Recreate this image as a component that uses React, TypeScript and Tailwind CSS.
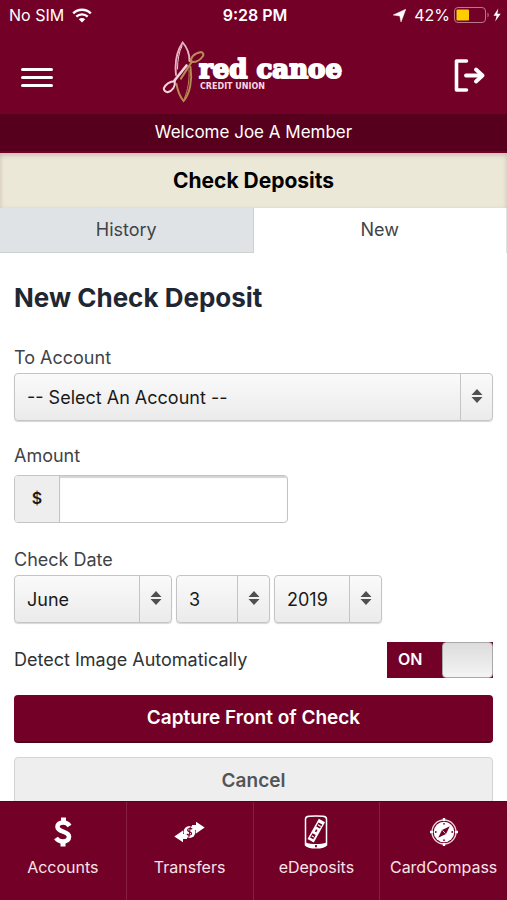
import React, { useState } from "react"

import clsx from "clsx"

type IconProps = { className?: string }

const WifiIcon = ({ className }: IconProps) => (
  <svg viewBox="0 0 20 15" className={className} fill="none" aria-hidden="true">
    <path d="M1.2 5.3a12.6 12.6 0 0 1 17.6 0" stroke="#fff" strokeWidth="2.4" />
    <path d="M4.3 8.6a8.2 8.2 0 0 1 11.4 0" stroke="#fff" strokeWidth="2.3" />
    <path d="M10 14.4 6.8 11.2a4.6 4.6 0 0 1 6.4 0z" fill="#fff" />
  </svg>
)

const LocationIcon = ({ className }: IconProps) => (
  <svg viewBox="0 0 13 13" className={className} aria-hidden="true">
    <path d="M12.8.2 8 13 6.8 7 .2 6z" fill="#fff" stroke="#fff" strokeWidth=".5" />
  </svg>
)

const BatteryIcon = ({ className }: IconProps) => (
  <svg viewBox="0 0 47 16" className={className} aria-hidden="true">
    <rect x=".5" y=".5" width="31" height="15" rx="3.5" fill="none" stroke="#b87a8b" />
    <path d="M33.5 5.5c1.6.6 1.6 4.4 0 5z" fill="#b87a8b" />
    <rect x="2.5" y="2.5" width="12.5" height="11" rx="1" fill="#ffcc00" />
    <path d="M44.3 1.5 39.5 8.8h3.1L41.2 14.5l5.5-7.7h-3.3z" fill="#fff" />
  </svg>
)

const Logo = () => (
  <svg
    viewBox="0 0 184 62"
    className="h-[62px] w-[184px]"
    role="img"
    aria-label="red canoe credit union"
  >
    <g fill="none" strokeLinecap="round">
      <path d="M14 34C12.500 20 15.500 9 20.700 1.500 25.500 7 27.500 14 27.500 20" stroke="#e6b3c1" strokeWidth="1.900" />
      <path d="M15.500 28c0-9 1.500-17 4.500-23" stroke="#f3d3dc" strokeWidth="1" />
      <path d="M14.500 43c1 6.500 3.500 12.500 7 17 6.500-7 9-21 7-34" stroke="#b98a58" strokeWidth="1.900" />
      <path d="M27 29c.5 10-1 20-4.500 28" stroke="#b98a58" strokeWidth="1" />
      <path d="M19 37.500 30 20.500" stroke="#b98a58" strokeWidth="2.200" />
      <path d="M29 21c-.8-4.500 3-9 10.500-10 2 1.200 2.200 2.500 1.500 4-2.800 4.300-7.500 6.500-12 6z" stroke="#b98a58" strokeWidth="2" />
      <path d="M12.500 39.500 24.500 24.500" stroke="#f3d3dc" strokeWidth="2.600" />
      <path d="M12.800 40.300C8.500 40.500 4 43 1.800 47.200c0 2 1.500 3.500 3.800 4C10.500 50 13.500 45.500 12.800 40.300z" stroke="#f3d3dc" strokeWidth="2" />
    </g>
    <text
      x="37"
      y="37"
      fill="#fff"
      stroke="#fff"
      strokeWidth="2"
      strokeLinejoin="round"
      className="font-['DejaVu_Serif',serif] text-[26px] font-bold"
    >
      red canoe
    </text>
    <text
      x="38"
      y="48"
      fill="#f3d9e0"
      className="font-['DejaVu_Sans',sans-serif] text-[8px] font-bold"
    >
      CREDIT UNION
    </text>
  </svg>
)

const LogoutIcon = ({ className }: IconProps) => (
  <svg viewBox="0 0 31 33" className={className} fill="none" stroke="#fff" aria-hidden="true">
    <path d="M12.5 2h-10v29h10" strokeWidth="3.6" strokeLinecap="round" strokeLinejoin="round" />
    <path d="M12 16.5h16" strokeWidth="3.8" strokeLinecap="round" />
    <path d="m22 10.5 6.5 6-6.5 6" strokeWidth="3.8" strokeLinecap="round" strokeLinejoin="round" />
  </svg>
)

const DollarIcon = () => (
  <svg viewBox="0 0 18 30" className="h-[30px] w-[18px]" fill="none" stroke="#fff" aria-hidden="true">
    <path d="M15.5 9C14 6.5 11.8 5.500 9.200 5.500c-3.400 0-5.700 1.700-5.700 4.300 0 6 11.500 3.600 11.500 10 0 2.900-2.400 4.700-6 4.700-3 0-5.400-1.200-7-3.500" strokeWidth="4.600" />
    <path d="M9.500.5V6M9 24v5.500" strokeWidth="5" />
  </svg>
)

const TransferIcon = () => (
  <svg viewBox="0 0 31 22" className="h-[22px] w-[31px]" aria-hidden="true">
    <path d="M22 .7 30.700 6.500 22 12.500V9h-4V4h4z" fill="#fff" />
    <path d="M9 9.500.3 15.500 9 21.300V18h4v-5H9z" fill="#fff" />
    <circle cx="15.500" cy="11" r="6" fill="#fff" />
    <path d="M18.300 8.200c-1.700-1.500-4.800-.8-4.700.9.100 1.900 4.200 1.500 4 3.600-.2 1.600-3.200 1.800-4.800.3M16.400 5.500l-1.600 11" fill="none" stroke="#730026" strokeWidth="1.100" />
  </svg>
)

const PhoneCheckIcon = () => (
  <svg viewBox="0 0 24 34" className="h-[34px] w-6" aria-hidden="true">
    <path d="M1.5 4C1.5 2.2 3 1.500 5 1.300c4.500-.5 9.500-.5 14 0 2 .2 3.500.9 3.500 2.700v26c-1.500 2-5.500 2.800-10.500 2.800S3 32 1.500 30z" fill="none" stroke="#fff" strokeWidth="1.500" />
    <path d="M1.500 27.500c6 2 15 2 21 0V30c-2 4-19 4-21 0z" fill="#fff" />
    <path d="M12 30v2.200" stroke="#730026" strokeWidth="1.800" />
    <path d="M14.800 3.800 21 7.300 9.800 27.500 3.500 24z" fill="#fff" />
    <g fill="#730026">
      <path d="m14.500 7.500 3.800 2-2.400 4-3.700-2z" />
      <path d="m12 14.200 1.500.8-1.200 2.200-1.500-.8z" />
      <path d="m8.500 18.200 3.300 1.800-2.500 4.300L6 22.500z" />
    </g>
    <path d="m14 9.800 2.800 1.600M7.800 20.700l2 1.400" stroke="#fff" strokeWidth="1.100" />
  </svg>
)

const CompassIcon = () => (
  <svg viewBox="0 0 28 28" className="size-7" aria-hidden="true">
    <circle cx="14" cy="14" r="12" fill="none" stroke="#f0d5dd" strokeWidth="1.300" />
    <circle cx="14" cy="14" r="10.300" fill="#fff" />
    <path d="M14 0v3M14 25v3M0 14h3M25 14h3" stroke="#fff" strokeWidth="2.400" />
    <path d="M19.800 8.200 16 16l-7.800 3.800L12 12z" fill="#730026" />
    <path d="m12.500 12.500 3 3" stroke="#fff" strokeWidth=".8" />
    <g fill="#730026">
      <circle cx="14" cy="5.800" r=".9" />
      <circle cx="14" cy="22.200" r=".9" />
      <circle cx="5.800" cy="14" r=".9" />
      <circle cx="22.200" cy="14" r=".9" />
    </g>
  </svg>
)

type SelectProps = {
  id: string
  label?: string
  options: string[]
  className?: string
}

const Select = ({ id, label, options, className }: SelectProps) => (
  <div className={clsx("relative", className)}>
    <select
      id={id}
      aria-label={label}
      className="h-12 w-full appearance-none rounded border border-[#c4c4c4] bg-linear-to-b from-[#fafafa] to-[#ebebeb] pt-0.5 pr-9 pl-3 text-lg text-[#1a1a1a] shadow-[0_1px_1px_#d8d8d8]"
    >
      {options.map((option) => (
        <option key={option}>{option}</option>
      ))}
    </select>
    <span className="pointer-events-none absolute inset-y-0 right-0 flex w-[33px] items-center justify-center border-l border-[#c4c4c4] pb-0.5">
      <svg viewBox="0 0 12 14" className="h-3.5 w-3" fill="#505050" aria-hidden="true">
        <path d="M6 0 11.500 6H.5zM.5 8h11L6 14z" />
      </svg>
    </span>
  </div>
)

const navItems = [
  { label: "Accounts", icon: <DollarIcon /> },
  { label: "Transfers", icon: <TransferIcon /> },
  { label: "eDeposits", icon: <PhoneCheckIcon /> },
  { label: "CardCompass", icon: <CompassIcon /> },
]

const App = () => {
  const [detect, setDetect] = useState(true)

  return (
    <div className="flex h-screen flex-col bg-white font-['Inter',sans-serif] text-[#3f4347]">
      <header className="shrink-0 bg-[#730026] text-white">
        <div className="grid h-[30px] grid-cols-[1fr_auto_1fr] items-center pr-1.5 pl-[9px] text-base">
          <div className="flex items-center gap-2">
            <span>No SIM</span>
            <WifiIcon className="h-[15px] w-5" />
          </div>
          <span className="font-semibold">9:28 PM</span>
          <div className="flex items-center justify-end gap-1">
            <LocationIcon className="mr-1 size-[13px]" />
            <span>42%</span>
            <BatteryIcon className="h-4 w-[47px]" />
          </div>
        </div>
        <div className="flex h-[84px] items-start justify-between pr-[22px] pl-[21px]">
          <button type="button" aria-label="Menu" className="mt-[38px] flex w-8 flex-col gap-[5px]">
            <span className="h-[3px] rounded-full bg-white" />
            <span className="h-[3px] rounded-full bg-white" />
            <span className="h-[3px] rounded-full bg-white" />
          </button>
          <div className="mt-[11px]">
            <Logo />
          </div>
          <button type="button" aria-label="Log out" className="mt-[29px]">
            <LogoutIcon className="h-[33px] w-[31px]" />
          </button>
        </div>
        <p className="h-[39px] border-b-2 border-[#730026] bg-[#57001d] text-center text-[17px] leading-9">
          Welcome Joe A Member
        </p>
      </header>

      <main className="min-h-0 flex-1 overflow-y-auto [scrollbar-width:none]">
        <h1 className="h-[55px] bg-[#ece8d8] text-center text-[21px] leading-[56px] font-bold text-black shadow-[inset_0_2px_5px_#c9bcae]">
          Check Deposits
        </h1>
        <div role="tablist" className="grid h-[45px] grid-cols-2 text-lg">
          <button
            type="button"
            role="tab"
            aria-selected={false}
            className="border-r border-b border-[#cfd2d3] bg-[#dfe3e6]"
          >
            History
          </button>
          <button
            type="button"
            role="tab"
            aria-selected={true}
            className="border-r border-[#dfe3e6] bg-white pb-0.5"
          >
            New
          </button>
        </div>

        <form className="px-3.5 pt-[29px] pb-4" onSubmit={(e) => e.preventDefault()}>
          <h2 className="text-[26px] leading-8 font-bold text-[#1f2733]">New Check Deposit</h2>

          <label htmlFor="account" className="mt-8 mb-[3px] block text-lg leading-6">
            To Account
          </label>
          <Select id="account" options={["-- Select An Account --"]} />

          <label htmlFor="amount" className="mt-[23px] mb-[7px] block text-lg leading-6">
            Amount
          </label>
          <div className="flex h-12 w-4/7 overflow-hidden rounded border border-[#c4c4c4]">
            <span className="flex w-[45px] shrink-0 items-center justify-center border-r border-[#c4c4c4] bg-[#eeeeee] pb-0.5 text-base font-semibold text-[#1a1a1a]">
              $
            </span>
            <input
              id="amount"
              type="text"
              inputMode="decimal"
              className="min-w-0 flex-1 px-3 text-lg shadow-[inset_0_2px_1px_#d4d4d4] outline-none"
            />
          </div>

          <label htmlFor="month" className="mt-[25px] mb-[3px] block text-lg leading-6">
            Check Date
          </label>
          <div className="flex gap-1">
            <Select id="month" options={["June"]} className="w-[158px]" />
            <Select id="day" label="Day" options={["3"]} className="w-[94px]" />
            <Select id="year" label="Year" options={["2019"]} className="w-[108px]" />
          </div>

          <div className="mt-[19px] flex h-9 items-center justify-between">
            <label htmlFor="detect" className="text-lg leading-6 text-[#2e3235]">
              Detect Image Automatically
            </label>
            <label
              className={clsx(
                "relative flex h-9 w-[106px] cursor-pointer",
                detect ? "bg-[#730026]" : "flex-row-reverse bg-gray-400"
              )}
            >
              <input
                id="detect"
                type="checkbox"
                checked={detect}
                onChange={() => setDetect(!detect)}
                className="absolute inset-0 size-full cursor-pointer appearance-none"
              />
              <span className="flex flex-1 items-center pb-0.5 pl-[11px] text-base font-semibold text-white">
                {detect ? "ON" : "OFF"}
              </span>
              <span className="w-[51px] rounded border border-[#a9a9a9] bg-linear-to-b from-[#dcdcdc] to-[#f4f4f4]" />
            </label>
          </div>

          <button
            type="submit"
            className="mt-[17px] block h-12 w-full rounded border-b-2 border-[#4d0019] bg-[#730026] text-[19px] font-semibold text-white"
          >
            Capture Front of Check
          </button>
          <button
            type="button"
            className="mt-3.5 block h-12 w-full rounded border border-[#d3d3d3] bg-[#eeeeee] text-[19px] font-semibold text-[#525558]"
          >
            Cancel
          </button>
        </form>
      </main>

      <nav className="grid h-[99px] shrink-0 grid-cols-4 border-t border-[#5c001e] bg-[#730026]">
        {navItems.map(({ label, icon }) => (
          <a
            key={label}
            href={`#${label.toLowerCase()}`}
            className="flex flex-col items-center border-r border-[#851f40] pt-3 text-base text-[#f8e3e9] last:border-r-0"
          >
            <span className="flex h-9 items-center">{icon}</span>
            <span className="mt-[5px]">{label}</span>
          </a>
        ))}
      </nav>
    </div>
  )
}

export default App
